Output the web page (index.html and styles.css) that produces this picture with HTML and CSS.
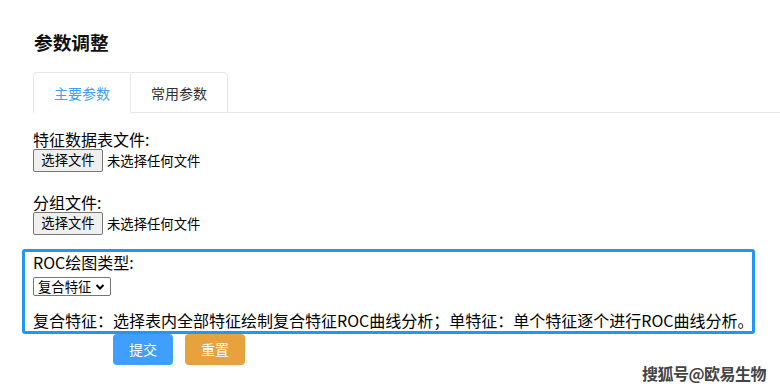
FILE: index.html
```html
<!DOCTYPE html>
<html lang="zh-CN">
<head>
<meta charset="utf-8">
<link rel="stylesheet" href="styles.css">
</head>
<body>
<div class="page">
  <h3 class="title">参数调整</h3>
  <div class="tabs">
    <div class="tab active">主要参数</div>
    <div class="tab">常用参数</div>
    <div class="tab-rest"></div>
  </div>
  <div class="form">
    <div class="field">
      <div class="label">特征数据表文件:</div>
      <div class="file-row"><span class="file-btn">选择文件</span><span class="file-none">未选择任何文件</span></div>
    </div>
    <div class="field">
      <div class="label">分组文件:</div>
      <div class="file-row"><span class="file-btn">选择文件</span><span class="file-none">未选择任何文件</span></div>
    </div>
    <div class="roc-box">
      <div class="label">ROC绘图类型:</div>
      <div class="select-row">
        <span class="select">复合特征<svg class="chev" width="10" height="8" viewBox="0 0 10 8"><path d="M1.5 2 L5 5.5 L8.5 2" fill="none" stroke="#000" stroke-width="2"/></svg></span>
      </div>
      <div class="blank"></div>
      <div class="label">复合特征：选择表内全部特征绘制复合特征ROC曲线分析；单特征：单个特征逐个进行ROC曲线分析。</div>
    </div>
    <div class="actions">
      <span class="btn btn-primary">提交</span>
      <span class="btn btn-warning">重置</span>
    </div>
  </div>
  <div class="watermark">搜狐号@欧易生物</div>
</div>
</body>
</html>
```
FILE: styles.css
```css
html, body {
  margin: 0;
  padding: 0;
  background: #fff;
}
body {
  font-family: "Noto Sans CJK SC", "Noto Sans", sans-serif;
  color: #000;
}
.page {
  position: relative;
  width: 780px;
  height: 391px;
  overflow: hidden;
}
.title {
  margin: 0;
  padding: 29px 0 0 34px;
  font-size: 18.7px;
  line-height: 25px;
  font-weight: bold;
  color: #111;
}
.tabs {
  display: flex;
  margin-top: 18px;
  margin-left: 33px;
  height: 41px;
}
.tab {
  box-sizing: border-box;
  width: 97px;
  height: 41px;
  border: 1px solid #e4e7ed;
  border-right: none;
  font-size: 14px;
  line-height: 40px;
  text-align: center;
  color: #303133;
}
.tab:first-child {
  border-top-left-radius: 4px;
}
.tab:nth-child(2) {
  width: 98px;
  border-right: 1px solid #e4e7ed;
  border-top-right-radius: 4px;
  border-bottom: 1px solid #e4e7ed;
}
.tab.active {
  color: #409eff;
  border-bottom: 1px solid #fff;
}
.tab-rest {
  flex: 1;
  border-bottom: 1px solid #e4e7ed;
}
.form {
  padding-top: 17px;
}
.field {
  padding-left: 33px;
  margin-bottom: 21px;
}
.field + .field {
  margin-bottom: 14px;
}
.label {
  font-size: 16px;
  line-height: 19px;
  white-space: nowrap;
}
.file-row {
  display: flex;
  align-items: center;
  height: 23px;
  font-size: 13.33px;
}
.file-btn {
  box-sizing: border-box;
  height: 23px;
  width: 70px;
  border: 1px solid #767676;
  border-radius: 2px;
  background: #efefef;
  text-align: center;
  line-height: 20px;
  font-size: 13.33px;
}
.file-none {
  margin-left: 4px;
  line-height: 20px;
}
.roc-box {
  box-sizing: border-box;
  height: 85px;
  margin-left: 22px;
  width: 733px;
  border: 3px solid #2196f3;
  border-radius: 3px;
  padding: 1px 0 0 8px;
}
.select-row {
  height: 19px;
  margin-top: 1px;
}
.select {
  box-sizing: border-box;
  display: inline-flex;
  align-items: center;
  height: 19px;
  width: 78px;
  padding-left: 4px;
  border: 1px solid #767676;
  border-radius: 2px;
  font-size: 13.33px;
  line-height: 17px;
}
.chev {
  margin-left: 4px;
}
.blank {
  height: 19px;
}
.roc-box .label {
  line-height: 19px;
}
.actions {
  display: flex;
  gap: 12px;
  padding-left: 113px;
  margin-top: 0;
}
.btn {
  display: inline-block;
  width: 60px;
  height: 31px;
  border-radius: 4px;
  color: #fff;
  font-size: 14px;
  line-height: 31px;
  text-align: center;
}
.btn-primary {
  background: #409eff;
}
.btn-warning {
  background: #e6a23c;
}
.watermark {
  position: absolute;
  right: 14px;
  bottom: 8px;
  font-size: 16px;
  line-height: 20px;
  font-weight: bold;
  color: #444;
  text-shadow: 0 0 1px #fff, 1px 1px 0 #fff, -1px -1px 0 #fff, 1px -1px 0 #fff, -1px 1px 0 #fff;
  letter-spacing: -0.5px;
}
```
